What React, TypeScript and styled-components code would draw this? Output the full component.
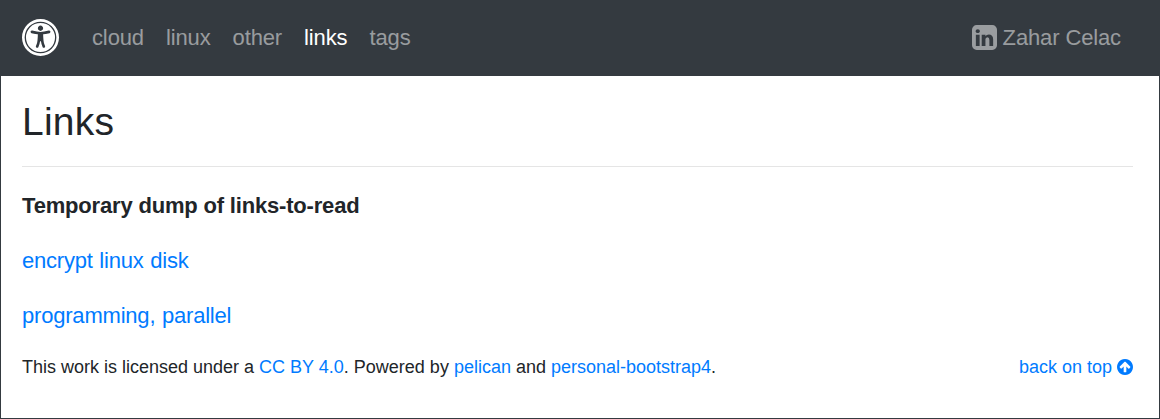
import React from "react";
import styled, { createGlobalStyle } from "styled-components";

const GlobalStyle = createGlobalStyle`
  *, *::before, *::after { box-sizing: border-box; }
  html { font-size: 22px; }
  body {
    margin: 0;
    background: #fff;
    color: #212529;
    font-family: "Liberation Sans", Arial, sans-serif;
    font-size: 22px;
    line-height: 1.5;
  }
`;

const Page = styled.div`
  height: 419px;
  border: 1px solid #343a40;
  border-top: 0;
  overflow: hidden;
`;

const Navbar = styled.nav`
  display: flex;
  align-items: center;
  height: 76px;
  padding: 0 27px 1px 21px;
  background: #343a40;
`;

const Icon = styled.svg<{ $size: number }>`
  display: block;
  flex: none;
  width: ${(p) => p.$size}px;
  height: ${(p) => p.$size}px;
  fill: currentColor;
`;

const Brand = styled.a`
  display: flex;
  margin-right: 22px;
  color: #fff;
`;

const NavList = styled.div<{ $end?: boolean }>`
  display: flex;
  margin-left: ${(p) => (p.$end ? "auto" : "0")};
`;

const NavLink = styled.a<{ $active?: boolean }>`
  display: flex;
  align-items: center;
  gap: 5.6px;
  padding: 0 11px;
  color: ${(p) => (p.$active ? "#fff" : "rgba(255, 255, 255, 0.5)")};
  letter-spacing: -0.13px;
  text-decoration: none;
`;

const Main = styled.main`
  padding: 22px 26px 0 21px;
`;

const Title = styled.h1`
  margin: 0;
  font-size: 39px;
  font-weight: 500;
  line-height: 48px;
  letter-spacing: 0.25px;
`;

const Rule = styled.hr`
  margin: 20px 0 22px;
  border: 0;
  border-top: 1px solid rgba(0, 0, 0, 0.1);
`;

const Paragraph = styled.p`
  margin: 0 0 22px;
  letter-spacing: -0.2px;
  word-spacing: 0.7px;
`;

const Strong = styled.strong`
  letter-spacing: -0.18px;
  word-spacing: 0;
`;

const Link = styled.a`
  color: #007bff;
  text-decoration: none;
`;

const Footer = styled.footer`
  display: flex;
  justify-content: space-between;
  font-size: 18px;
  line-height: 26px;
`;

const TopLink = styled(Link)`
  display: flex;
  align-items: center;
  gap: 5px;
`;

const AccessIcon = () => (
  <Icon $size={37} viewBox="0 0 1792 1792">
    <path d="M1374 609q-6-26-28.5-39.5t-48.5-7.5q-261 62-401 62t-401-62q-26-6-48.5 7.5t-28.5 39.5 7.5 48.5 39.5 28.5q194 46 303 58-2 158-15.5 269t-26.5 155.5-41 115.5l-9 21q-10 25 1 49t36 34q9 4 23 4 44 0 60-41l8-20q54-139 71-259h42q17 120 71 259l8 20q16 41 60 41 14 0 23-4 25-10 36-34t1-49l-9-21q-28-71-41-115.5t-26.5-155.5-15.5-269q109-12 303-58 26-6 39.5-28.5t7.5-48.5zm-350-161q0-53-37.5-90.5t-90.5-37.5-90.5 37.5-37.5 90.5 37.5 90.5 90.5 37.5 90.5-37.5 37.5-90.5zm576 448q0 143-55.5 273.5t-150 225-225 150-273.5 55.5-273.5-55.5-225-150-150-225-55.5-273.5 55.5-273.5 150-225 225-150 273.5-55.5 273.5 55.5 225 150 150 225 55.5 273.5zm-704-768q-156 0-298 61t-245 164-164 245-61 298 61 298 164 245 245 164 298 61 298-61 245-164 164-245 61-298-61-298-164-245-245-164-298-61zm896 768q0 182-71 348t-191 286-286 191-348 71-348-71-286-191-191-286-71-348 71-348 191-286 286-191 348-71 348 71 286 191 191 286 71 348z" fillRule="evenodd" />
  </Icon>
);

const LinkedinIcon = () => (
  <Icon $size={25} viewBox="128 128 1536 1536">
    <path d="M365 1414h231v-694h-231v694zm246-908q-1-52-36-86t-93-34-94.5 34-36.5 86q0 51 35.5 85.5t92.5 34.5h1q59 0 95-34.5t36-85.5zm585 908h231v-398q0-154-73-233t-193-79q-136 0-209 117h2v-101h-231q3 66 0 694h231v-388q0-38 7-56 15-35 45-59.5t74-24.5q116 0 116 157v371zm468-998v960q0 119-84.5 203.5t-203.5 84.5h-960q-119 0-203.5-84.5t-84.5-203.5v-960q0-119 84.5-203.5t203.5-84.5h960q119 0 203.5 84.5t84.5 203.5z" fillRule="evenodd" />
  </Icon>
);

const ArrowUpIcon = () => (
  <Icon $size={16} viewBox="128 128 1536 1536">
    <path d="M1412 897q0-27-18-45l-362-362-91-91q-18-18-45-18t-45 18l-91 91-362 362q-18 18-18 45t18 45l91 91q18 18 45 18t45-18l189-189v502q0 26 19 45t45 19h128q26 0 45-19t19-45v-502l189 189q19 19 45 19t45-19l91-91q18-18 18-45zm252-1q0 209-103 385.5t-279.5 279.5-385.5 103-385.5-103-279.5-279.5-103-385.5 103-385.5 279.5-279.5 385.5-103 385.5 103 279.5 279.5 103 385.5z" fillRule="evenodd" />
  </Icon>
);

const sections = ["cloud", "linux", "other", "links", "tags"];

export default function App() {
  return (
    <Page>
      <GlobalStyle />
      <Navbar>
        <Brand>
          <AccessIcon />
        </Brand>
        <NavList>
          {sections.map((name) => (
            <NavLink key={name} $active={name === "links"}>
              {name}
            </NavLink>
          ))}
        </NavList>
        <NavList $end>
          <NavLink>
            <LinkedinIcon />
            Zahar Celac
          </NavLink>
        </NavList>
      </Navbar>
      <Main>
        <Title>Links</Title>
        <Rule />
        <Paragraph>
          <Strong>Temporary dump of links-to-read</Strong>
        </Paragraph>
        <Paragraph>
          <Link>encrypt linux disk</Link>
        </Paragraph>
        <Paragraph>
          <Link>programming, parallel</Link>
        </Paragraph>
        <Footer>
          <span>
            This work is licensed under a <Link>CC BY 4.0</Link>. Powered by{" "}
            <Link>pelican</Link> and <Link>personal-bootstrap4</Link>.
          </span>
          <TopLink>
            back on top <ArrowUpIcon />
          </TopLink>
        </Footer>
      </Main>
    </Page>
  );
}
